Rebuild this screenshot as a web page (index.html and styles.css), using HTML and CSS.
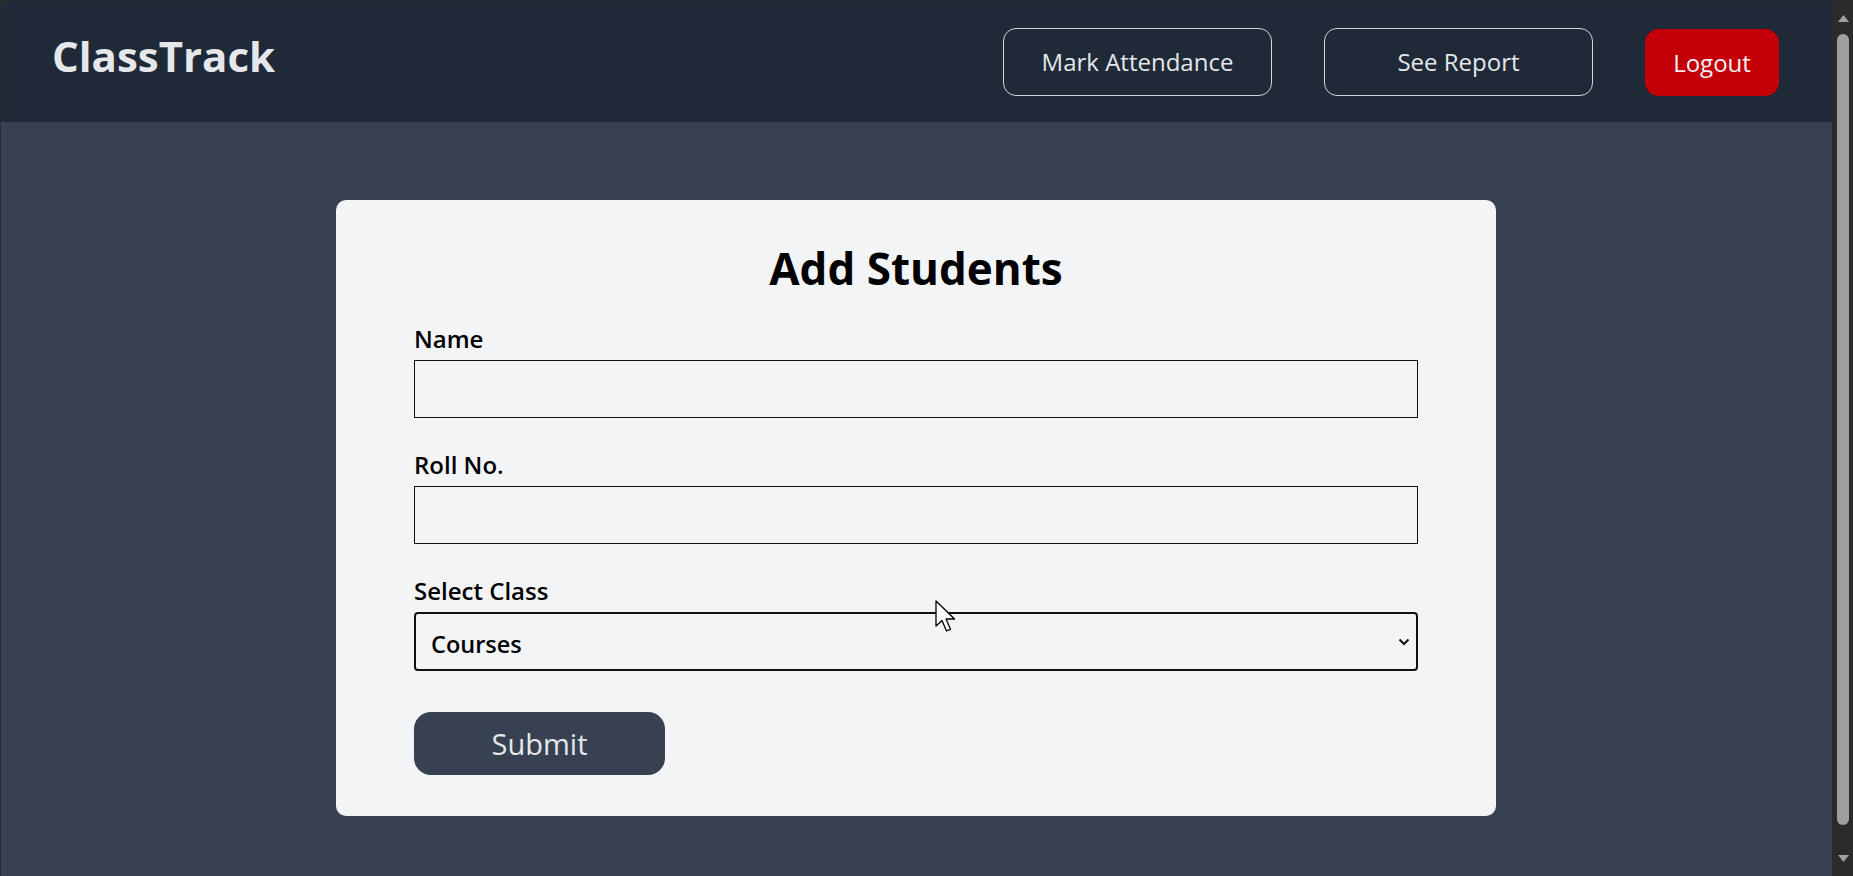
FILE: index.html
```html
<!DOCTYPE html>
<html lang="en">
<head>
<meta charset="utf-8">
<title>ClassTrack</title>
<link rel="stylesheet" href="styles.css">
</head>
<body>
<div class="window">
  <div class="app">
    <header class="topbar">
      <div class="logo">ClassTrack</div>
      <nav class="nav">
        <a class="nav-btn outline" href="#">Mark Attendance</a>
        <a class="nav-btn outline" href="#">See Report</a>
        <a class="nav-btn logout" href="#">Logout</a>
      </nav>
    </header>
    <main class="main">
      <form class="card">
        <h1 class="card-title">Add Students</h1>
        <div class="field">
          <label class="label" for="name">Name</label>
          <input class="input" id="name" type="text">
        </div>
        <div class="field">
          <label class="label" for="roll">Roll No.</label>
          <input class="input" id="roll" type="text">
        </div>
        <div class="field">
          <label class="label" for="cls">Select Class</label>
          <div class="select-wrap">
            <select class="select" id="cls">
              <option>Courses</option>
            </select>
            <svg class="chev" width="12" height="8" viewBox="0 0 12 8"><path d="M1.5 1.5 L6 6 L10.5 1.5" fill="none" stroke="#111" stroke-width="2"/></svg>
          </div>
        </div>
        <button class="submit" type="button">Submit</button>
      </form>
      <svg class="cursor" width="22" height="34" viewBox="0 0 22 34"><path d="M1 1 L1 26 L7 20.5 L11.5 31 L15.5 29.2 L11 19 L19.5 19 Z" fill="#fff" stroke="#000" stroke-width="1.3" stroke-linejoin="round"/></svg>
    </main>
  </div>
  <div class="scrollbar">
    <svg class="arrow" width="11" height="7" viewBox="0 0 11 7"><path d="M0 7 L5.5 0 L11 7 Z" fill="#9f9f9f"/></svg>
    <div class="thumb"></div>
    <svg class="arrow" width="11" height="7" viewBox="0 0 11 7"><path d="M0 0 L5.5 7 L11 0 Z" fill="#9f9f9f"/></svg>
  </div>
</div>
</body>
</html>
```
FILE: styles.css
```css
* { box-sizing: border-box; }
html, body { margin: 0; padding: 0; height: 100%; }
body {
  background: #2b2b2b;
  font-family: "Open Sans", "Noto Sans", sans-serif;
  overflow: hidden;
}
.window {
  display: flex;
  height: 876px;
}
.app {
  flex: 1;
  display: flex;
  flex-direction: column;
  margin: 1px 0 0 1px;
  border-top-left-radius: 8px;
  overflow: hidden;
  background: #374151;
  position: relative;
}
.topbar {
  height: 121px;
  flex: none;
  background: #1f2937;
  display: flex;
  justify-content: space-between;
  align-items: flex-start;
  padding: 26px 53px 0 51px;
}
.logo {
  font-size: 42px;
  font-weight: 700;
  color: #e5e7eb;
  line-height: 57px;
}
.nav {
  display: flex;
  align-items: center;
  gap: 52px;
  margin-top: 1px;
  height: 68px;
}
.nav-btn {
  display: flex;
  align-items: center;
  justify-content: center;
  text-decoration: none;
  color: #e5e7eb;
  font-size: 24px;
  line-height: 1;
}
.outline {
  width: 269px;
  height: 68px;
  border: 1px solid #d1d5db;
  border-radius: 13px;
}
.logout {
  width: 134px;
  height: 67px;
  margin-top: 1px;
  background: #c30008;
  border-radius: 14px;
  color: #f3f0f3;
}
.main {
  flex: 1;
  display: flex;
  justify-content: center;
  align-items: flex-start;
  padding-top: 78px;
  padding-right: 1px;
}
.card {
  width: 1160px;
  background: #f3f4f6;
  border-radius: 10px;
  padding: 38px 78px 41px;
  display: flex;
  flex-direction: column;
}
.card-title {
  margin: 0 0 24px;
  text-align: center;
  font-size: 44px;
  font-weight: 700;
  line-height: 60px;
  color: #000;
}
.field {
  display: flex;
  flex-direction: column;
  margin-bottom: 30px;
}
.field:last-of-type { margin-bottom: 41px; }
.label {
  font-size: 24px;
  font-weight: 600;
  line-height: 33px;
  color: #000;
  margin-bottom: 5px;
}
.input {
  height: 58px;
  border: 1px solid #111;
  background: #f3f4f6;
  font: inherit;
  font-size: 22px;
  padding: 0 14px;
  outline: none;
}
.select-wrap {
  position: relative;
}
.select {
  width: 100%;
  height: 59px;
  appearance: none;
  -webkit-appearance: none;
  border: 2px solid #111;
  border-radius: 4px;
  background: #f3f4f6;
  font-family: inherit;
  font-size: 23.5px;
  font-weight: 600;
  color: #000;
  padding: 5px 40px 0 15px;
  outline: none;
}
.chev {
  position: absolute;
  right: 8px;
  top: 26px;
}
.submit {
  align-self: flex-start;
  width: 251px;
  height: 63px;
  border: none;
  border-radius: 17px;
  background: #374151;
  color: #e5e7eb;
  font-family: inherit;
  font-size: 29px;
  line-height: 1;
  padding: 0;
}
.cursor {
  position: absolute;
  left: 934px;
  top: 599px;
}
.scrollbar {
  width: 21px;
  flex: none;
  background: #2b2b2b;
  display: flex;
  flex-direction: column;
  align-items: center;
  padding: 15px 0 14px 1px;
}
.arrow { flex: none; }
.thumb {
  width: 12px;
  flex: 1;
  margin: 12px 0 30px;
  background: #9f9f9f;
  border-radius: 6px;
}
```
